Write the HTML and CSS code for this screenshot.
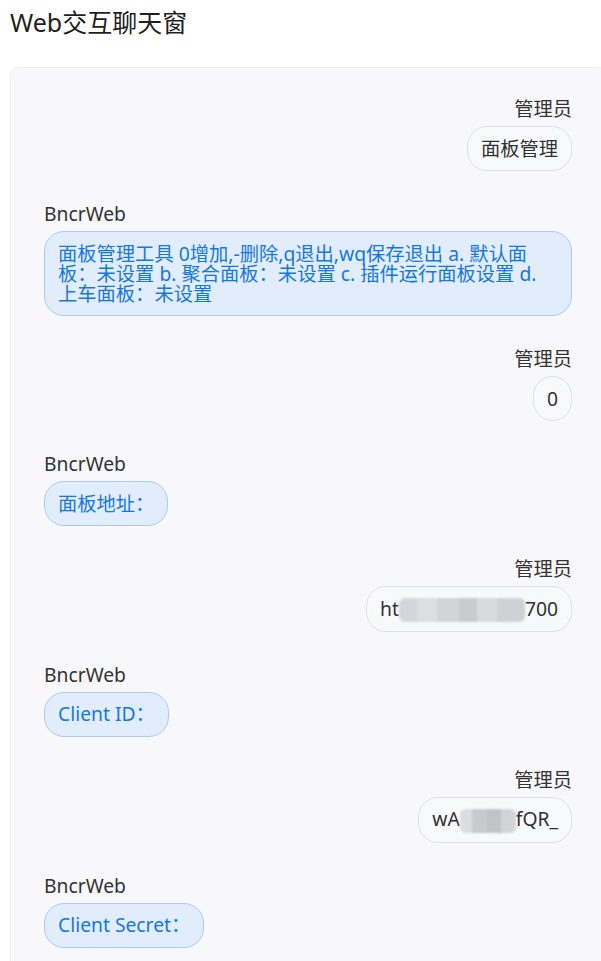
FILE: index.html
```html
<!DOCTYPE html>
<html lang="zh-CN">
<head>
<meta charset="utf-8">
<title>Web交互聊天窗</title>
<link rel="stylesheet" href="styles.css">
</head>
<body>
<div class="page">
  <h1 class="title">Web交互聊天窗</h1>
  <div class="chat">
    <div class="msg msg-right">
      <div class="name">管理员</div>
      <div class="bubble">面板管理</div>
    </div>
    <div class="msg msg-left">
      <div class="name">BncrWeb</div>
      <div class="bubble bubble-bot">面板管理工具 0增加,-删除,q退出,wq保存退出 a. 默认面板：未设置 b. 聚合面板：未设置 c. 插件运行面板设置 d. 上车面板：未设置</div>
    </div>
    <div class="msg msg-right">
      <div class="name">管理员</div>
      <div class="bubble">0</div>
    </div>
    <div class="msg msg-left">
      <div class="name">BncrWeb</div>
      <div class="bubble bubble-bot">面板地址：</div>
    </div>
    <div class="msg msg-right">
      <div class="name">管理员</div>
      <div class="bubble">ht<span class="mosaic mosaic-url" aria-hidden="true"></span>700</div>
    </div>
    <div class="msg msg-left">
      <div class="name">BncrWeb</div>
      <div class="bubble bubble-bot">Client ID：</div>
    </div>
    <div class="msg msg-right">
      <div class="name">管理员</div>
      <div class="bubble">wA<span class="mosaic mosaic-id" aria-hidden="true"></span>fQR_</div>
    </div>
    <div class="msg msg-left">
      <div class="name">BncrWeb</div>
      <div class="bubble bubble-bot">Client Secret：</div>
    </div>
  </div>
</div>
</body>
</html>
```

FILE: styles.css
```css
html, body {
  margin: 0;
  padding: 0;
  background: #ffffff;
  overflow: hidden;
}

body {
  font-family: "Noto Sans", "Noto Sans CJK SC", sans-serif;
  color: #303133;
}

.page {
  padding: 6px 0 0 10px;
}

.title {
  margin: 0 0 29px;
  font-size: 25px;
  line-height: 32px;
  font-weight: 400;
  color: #1f1f1f;
}

.chat {
  width: 596px;
  box-sizing: border-box;
  min-height: 920px;
  background: #f8f8fa;
  border: 1px solid #eef0f3;
  border-radius: 8px;
  padding: 28px 20px 20px;
  display: flex;
  flex-direction: column;
  gap: 30px;
}

.msg {
  display: flex;
  flex-direction: column;
  gap: 4px;
  padding: 0 13px;
}

.msg-right {
  align-items: flex-end;
}

.msg-left {
  align-items: flex-start;
}

.name {
  font-size: 19.3px;
  line-height: 26px;
  color: #333;
}

.bubble {
  font-size: 19.3px;
  line-height: 20px;
  padding: 11.5px 13px;
  border: 1px solid #dfe1e5;
  border-radius: 20px;
  background: #f8f9fa;
  color: #303133;
  max-width: 100%;
  box-sizing: border-box;
}

.bubble-bot {
  background: #e1edfc;
  border-color: #a9cbf3;
  color: #1677e0;
}

.mosaic {
  display: inline-block;
  height: 24px;
  margin: -3px 0;
  vertical-align: middle;
  filter: blur(1.2px);
  border-radius: 6px;
}

.mosaic-url {
  width: 126px;
  background:
    linear-gradient(90deg, #d4d6d9 0 14%, #dcdee0 14% 30%, #d2d4d6 30% 48%, #c9cbce 48% 62%, #d8dadc 62% 78%, #cfd1d4 78% 100%);
}

.mosaic-id {
  width: 56px;
  background:
    linear-gradient(90deg, #dcdde0 0 22%, #c9cacd 22% 48%, #c2c3c6 48% 74%, #d3d4d7 74% 100%);
}
```
